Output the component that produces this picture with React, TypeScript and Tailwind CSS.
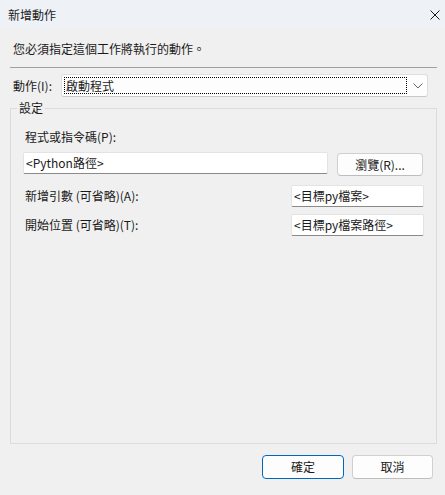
const FONT = "font-['Noto_Sans_CJK_TC','Noto_Sans',sans-serif]";

function TextBox({ value, className }: { value: string; className: string }) {
  return (
    <div
      className={`flex h-[22px] items-center rounded-[2px] border border-[#e3e3e3] border-b-[#8a8a8a] bg-white pl-[2px] text-[#1a1a1a] ${className}`}
    >
      {value}
    </div>
  );
}

function Button({ label, primary }: { label: string; primary?: boolean }) {
  return (
    <button
      className={`flex h-[24px] items-center justify-center rounded-[4px] border bg-[#fdfdfd] text-[#1a1a1a] ${
        primary ? "w-[82px] border-[#0067c0]" : "w-[81px] border-[#d0d0d0] border-b-[#bdbdbd]"
      }`}
    >
      {label}
    </button>
  );
}

export default function App() {
  return (
    <div className={`flex h-[495px] w-[445px] flex-col bg-[#f0f0f0] text-[12px] leading-[16px] text-[#1a1a1a] ${FONT}`}>
      {/* title bar */}
      <div className="flex h-[29px] shrink-0 items-center justify-between bg-[#eef2f7] pl-[8px] pr-[5px]">
        <span>新增動作</span>
        <svg width="10" height="10" viewBox="0 0 10 10" className="mr-[0px]">
          <path d="M0.5 0.5 L9.5 9.5 M9.5 0.5 L0.5 9.5" stroke="#1a1a1a" strokeWidth="1" fill="none" />
        </svg>
      </div>

      <div className="flex flex-1 flex-col pl-[10px] pr-[8px]">
        <p className="mt-[12px] pl-[3px]">您必須指定這個工作將執行的動作。</p>
        <div className="mt-[10px] h-px bg-[#a0a0a0]" />

        {/* action row */}
        <div className="mt-[6px] flex h-[23px] items-center">
          <span className="w-[51px] pl-[3px]">動作(I):</span>
          <div className="flex h-[23px] w-[367px] items-center rounded-[3px] border border-[#dedede] border-b-[#c8c8c8] bg-[#fdfdfd] pl-[2px] pr-[4px]">
            <div className="flex h-[17px] w-[346px] items-center border border-dotted border-black pl-[1px]">
              啟動程式
            </div>
            <svg width="10" height="6" viewBox="0 0 10 6" className="ml-[6px]">
              <path d="M0.5 0.5 L5 5 L9.5 0.5" stroke="#606060" strokeWidth="1" fill="none" />
            </svg>
          </div>
        </div>

        {/* settings group */}
        <fieldset className="mt-[3px] h-[344px] w-[427px] border border-[#dcdcdc]">
          <legend className="ml-[6px] px-[2px]">設定</legend>
          <div className="flex flex-col pl-[12px]">
            <span className="mt-[13px] pl-[2px]">程式或指令碼(P):</span>
            <div className="mt-[7px] flex h-[24px] items-start">
              <TextBox value="<Python路徑>" className="w-[305px]" />
              <div className="ml-[9px] mt-[1px]">
                <button className="flex h-[23px] w-[86px] items-center justify-center rounded-[4px] border border-[#d0d0d0] border-b-[#bdbdbd] bg-[#fdfdfd]">
                  瀏覽(R)...
                </button>
              </div>
            </div>
            <div className="mt-[9px] flex h-[22px] items-center">
              <span className="w-[268px] pl-[2px]">新增引數 (可省略)(A):</span>
              <TextBox value="<目標py檔案>" className="w-[133px]" />
            </div>
            <div className="mt-[7px] flex h-[22px] items-center">
              <span className="w-[268px] pl-[2px]">開始位置 (可省略)(T):</span>
              <TextBox value="<目標py檔案路徑>" className="w-[133px]" />
            </div>
          </div>
        </fieldset>

        <div className="mt-[11px] flex justify-end gap-[8px] pr-[4px]">
          <Button label="確定" primary />
          <Button label="取消" />
        </div>
      </div>
    </div>
  );
}
